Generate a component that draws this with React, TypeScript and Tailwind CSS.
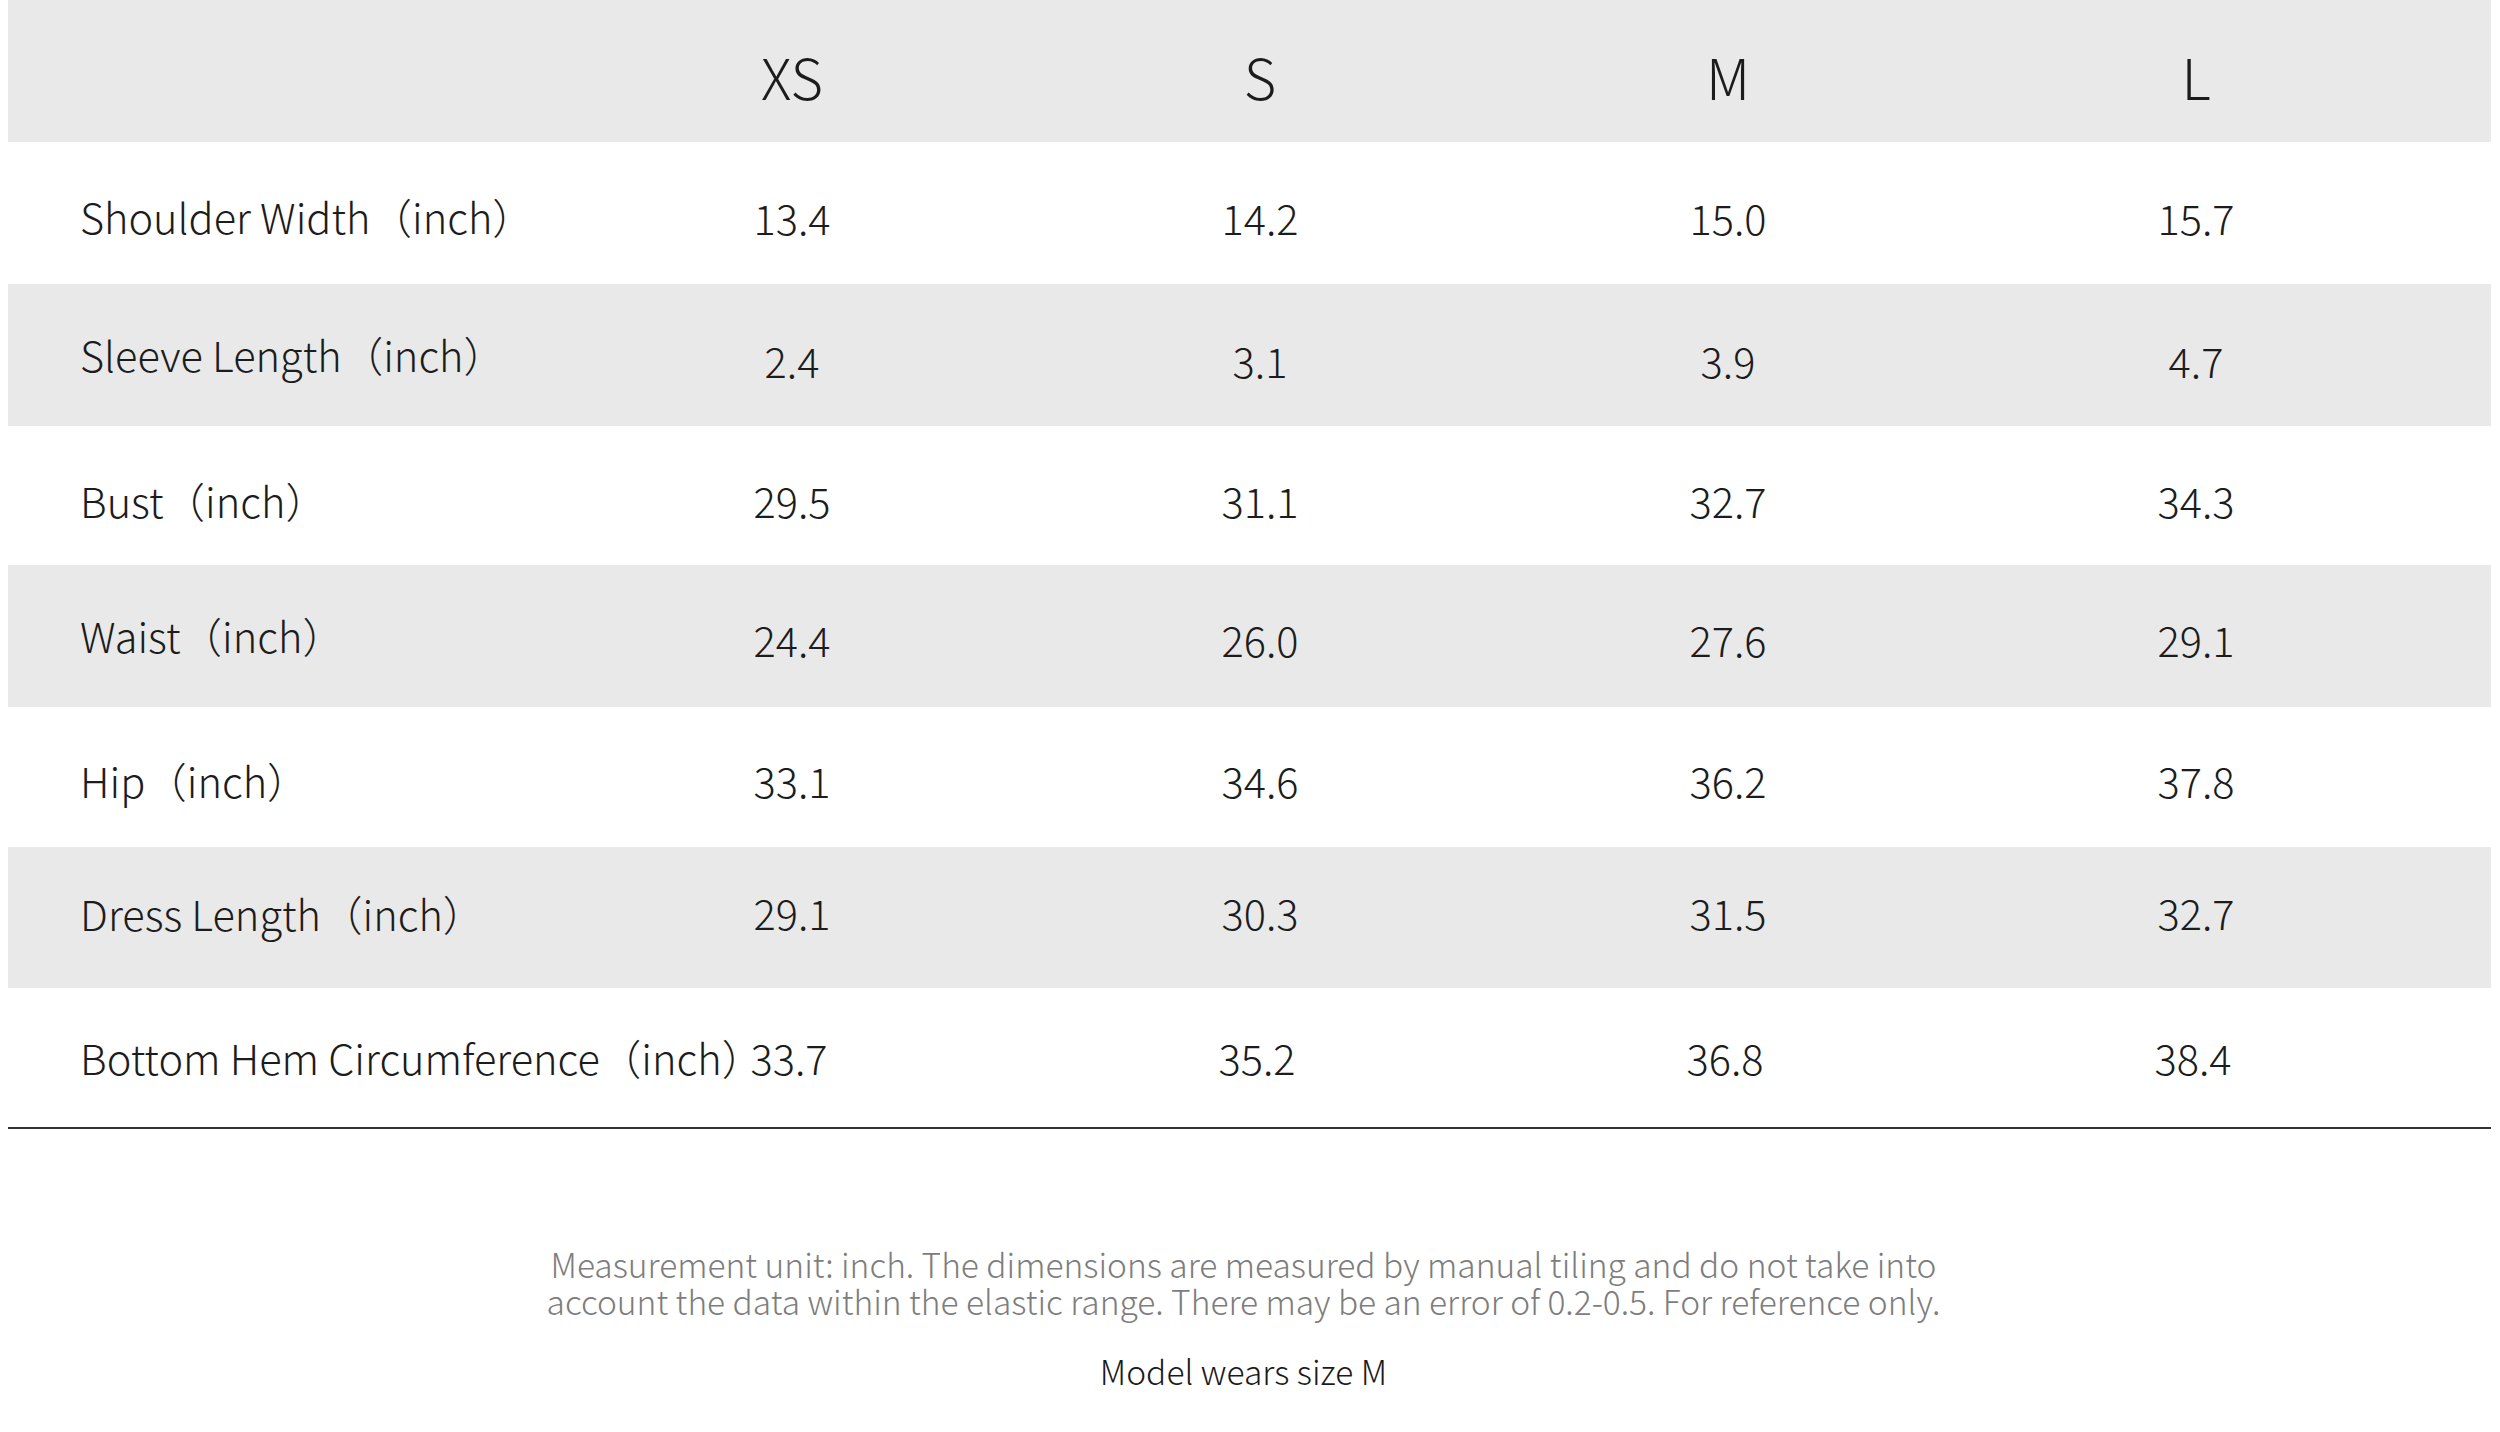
import React from "react";

type Row = {
  label: string;
  values: string[];
  h: string;
  bg: string;
  lp: string;
  vp: string;
  last?: boolean;
};

const rows: Row[] = [
  { label: "Shoulder Width", values: ["13.4", "14.2", "15.0", "15.7"], h: "h-[142px]", bg: "bg-white", lp: "pt-[54px]", vp: "pt-[55px]" },
  { label: "Sleeve Length", values: ["2.4", "3.1", "3.9", "4.7"], h: "h-[142px]", bg: "bg-[#e9e9e9]", lp: "pt-[50px]", vp: "pt-[56px]" },
  { label: "Bust", values: ["29.5", "31.1", "32.7", "34.3"], h: "h-[139px]", bg: "bg-white", lp: "pt-[54px]", vp: "pt-[54px]" },
  { label: "Waist", values: ["24.4", "26.0", "27.6", "29.1"], h: "h-[142px]", bg: "bg-[#e9e9e9]", lp: "pt-[50px]", vp: "pt-[54px]" },
  { label: "Hip", values: ["33.1", "34.6", "36.2", "37.8"], h: "h-[140px]", bg: "bg-white", lp: "pt-[53px]", vp: "pt-[53px]" },
  { label: "Dress Length", values: ["29.1", "30.3", "31.5", "32.7"], h: "h-[141px]", bg: "bg-[#e9e9e9]", lp: "pt-[46px]", vp: "pt-[45px]" },
  { label: "Bottom Hem Circumference", values: ["33.7", "35.2", "36.8", "38.4"], h: "h-[141px]", bg: "bg-white", lp: "pt-[49px]", vp: "pt-[49px]", last: true },
];

const font = {
  fontFamily:
    '"Noto Sans CJK SC Light", "Source Han Sans SC Light", "Noto Sans CJK SC", "Noto Sans CJK JP", "Noto Sans", sans-serif',
};

export default function App() {
  return (
    <div className="w-[2500px] h-[1432px] bg-white overflow-hidden font-light text-[#1c1c1c]" style={font}>
      <div className="ml-[8px] w-[2483px]">
        <div className="h-[142px] bg-[#e9e9e9] grid grid-cols-[550px_468px_468px_468px_468px]">
          <div />
          {["XS", "S", "M", "L"].map((s) => (
            <div key={s} className="text-center text-[56px] leading-none pt-[48px]">
              {s}
            </div>
          ))}
        </div>
        {rows.map((r) => (
          <div
            key={r.label}
            className={`${r.h} ${r.bg} ${r.last ? "border-b-2 border-[#333333]" : ""} grid grid-cols-[550px_468px_468px_468px_468px] text-[41.5px] leading-none`}
          >
            <div className={`pl-[72px] whitespace-nowrap ${r.lp}`}>
              {r.label}（inch<span className="tracking-[-0.5em]">）</span>
            </div>
            {r.values.map((v, i) => (
              <div key={i} className={`text-center ${r.vp} ${r.last ? "-translate-x-[3px]" : ""}`}>
                {v}
              </div>
            ))}
          </div>
        ))}
      </div>
      <div className="w-[2487px] text-center mt-[116px]">
        <p className="text-[33.5px] leading-[37px] text-[#7d7d7d]">
          Measurement unit: inch. The dimensions are measured by manual tiling and do not take into
          <br />
          account the data within the elastic range. There may be an error of 0.2-0.5. For reference only.
        </p>
        <p className="text-[33.5px] leading-[37px] text-[#1a1a1a] mt-[33px]">Model wears size M</p>
      </div>
    </div>
  );
}
